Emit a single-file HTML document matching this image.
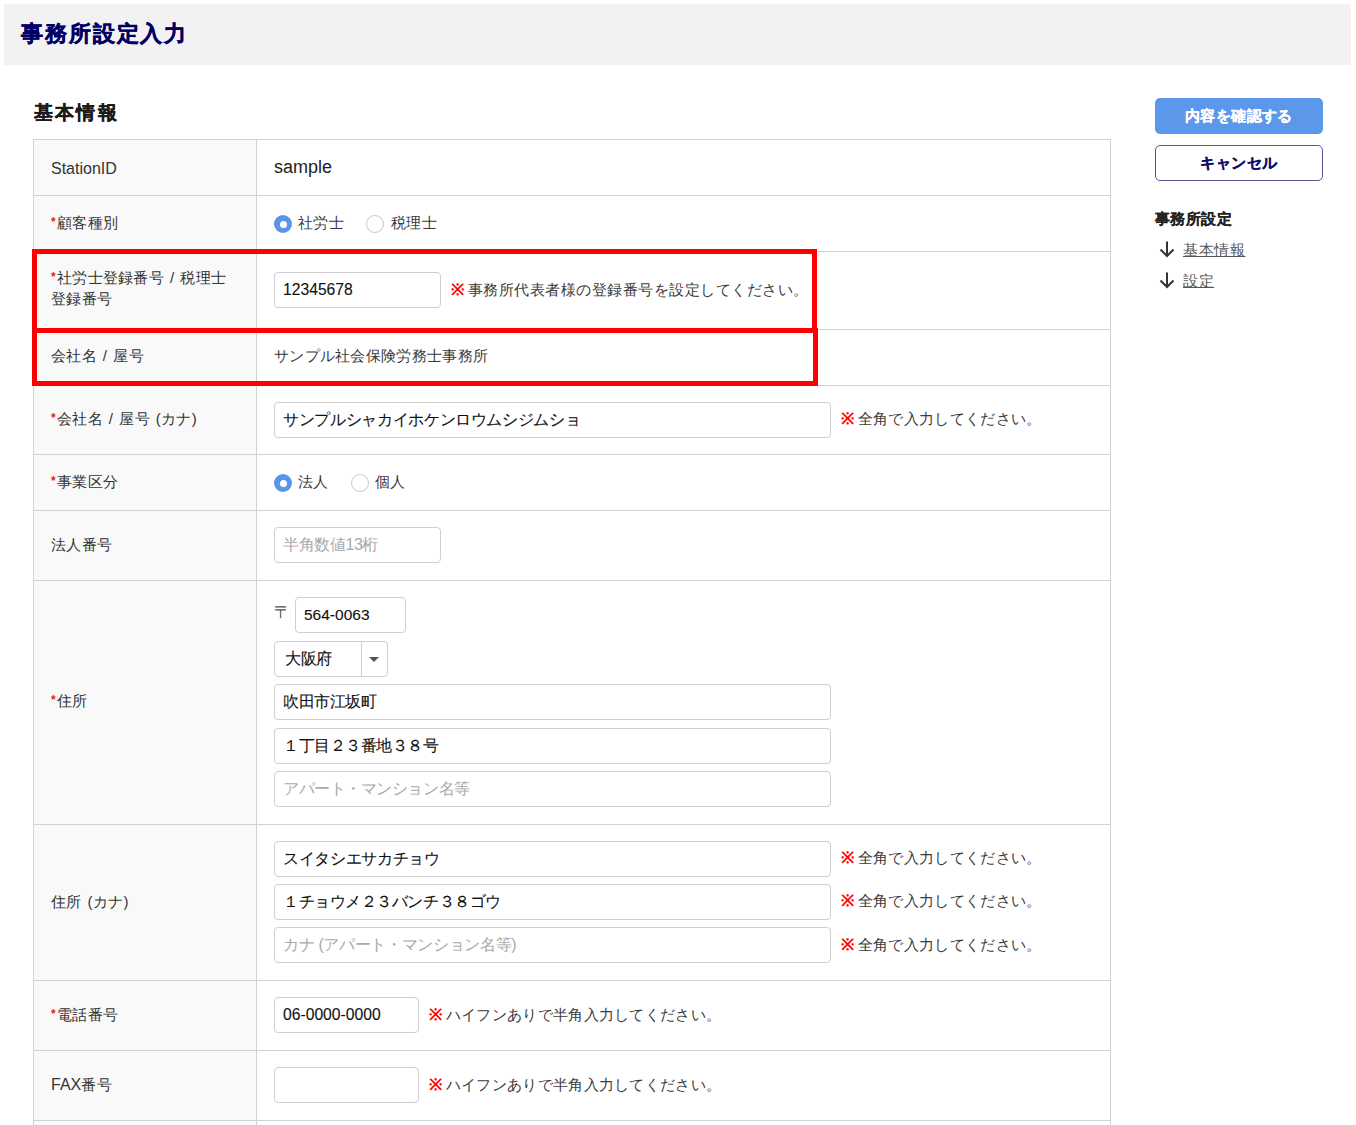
<!DOCTYPE html><html><head><meta charset="utf-8"><style>
*{box-sizing:border-box;margin:0;padding:0}
html,body{width:1356px;height:1125px;overflow:hidden;background:#fff}
body{position:relative;font-family:"Liberation Sans",sans-serif;color:#333;font-size:15px}
.a{position:absolute;white-space:nowrap}
.hdr{position:absolute;left:4px;top:4px;width:1347px;height:61px;background:#f2f2f2}
.title{left:21px;top:19px;font-size:22px;letter-spacing:1.9px;font-weight:bold;color:#000066;line-height:30px;-webkit-text-stroke:0.4px #000066}
.h2{left:34px;top:100px;font-size:19px;letter-spacing:2.2px;font-weight:bold;color:#1a1a1a;line-height:26px;-webkit-text-stroke:0.3px #1a1a1a}
.lab{background:#f9f9f9}
.hl{position:absolute;height:1px;background:#d2d2d2}
.vl{position:absolute;width:1px;background:#d2d2d2}
.lbl{left:51px;font-size:15px;letter-spacing:0.3px;word-spacing:1.5px;color:#333;line-height:20px}
.req{color:#f01818;font-size:12px;font-weight:bold;vertical-align:top;position:relative;top:-1px;margin-right:1px}
.inp{position:absolute;border:1px solid #cfcfcf;border-radius:4px;background:#fff;height:36px}
.itx{font-size:16px;color:#111;line-height:20px;-webkit-text-stroke:0.1px #111}
.itx.ph{-webkit-text-stroke:0}
.ph{color:#a9a9a9}
.note{font-size:15px;letter-spacing:0.3px;color:#3a3a3a;line-height:20px}
.note b{color:#f00;font-weight:bold;margin-right:3.5px;font-size:16px;line-height:20px}
.radio{position:absolute;width:18px;height:18px;border-radius:50%}
.ron{background:#5a94e6}
.ron:after{content:"";position:absolute;left:5.5px;top:5.5px;width:7px;height:7px;border-radius:50%;background:#fff}
.roff{border:1px solid #c8c8c8;background:#fff}
.redbox{position:absolute;border:5px solid #f00}
</style></head><body>

<div class="hdr"></div>
<div class="a title">事務所設定入力</div>
<div class="a h2">基本情報</div>
<div class="a lab" style="left:33px;top:139px;width:224px;height:986px"></div>
<div class="hl" style="left:33px;top:139px;width:1078px"></div>
<div class="hl" style="left:33px;top:195px;width:1078px"></div>
<div class="hl" style="left:33px;top:251px;width:1078px"></div>
<div class="hl" style="left:33px;top:329px;width:1078px"></div>
<div class="hl" style="left:33px;top:385px;width:1078px"></div>
<div class="hl" style="left:33px;top:454px;width:1078px"></div>
<div class="hl" style="left:33px;top:510px;width:1078px"></div>
<div class="hl" style="left:33px;top:580px;width:1078px"></div>
<div class="hl" style="left:33px;top:824px;width:1078px"></div>
<div class="hl" style="left:33px;top:980px;width:1078px"></div>
<div class="hl" style="left:33px;top:1050px;width:1078px"></div>
<div class="hl" style="left:33px;top:1120px;width:1078px"></div>
<div class="vl" style="left:33px;top:139px;height:986px"></div>
<div class="vl" style="left:256px;top:139px;height:986px"></div>
<div class="vl" style="left:1110px;top:139px;height:986px"></div>
<div class="a lbl" style="top:159px;font-size:16px;letter-spacing:0">StationID</div>
<div class="a" style="left:274px;top:156px;font-size:18px;color:#222;line-height:22px">sample</div>
<div class="a lbl" style="top:213px"><span class="req">*</span>顧客種別</div>
<div class="radio ron" style="left:274px;top:215px"></div>
<div class="a note" style="left:298px;top:213px">社労士</div>
<div class="radio roff" style="left:366px;top:215px"></div>
<div class="a note" style="left:391px;top:213px">税理士</div>
<div class="a lbl" style="top:268px"><span class="req">*</span>社労士登録番号 / 税理士</div>
<div class="a lbl" style="top:289px">登録番号</div>
<div class="inp" style="left:274px;top:272px;width:167px;height:36px"></div>
<div class="a itx" style="left:283px;top:280px;letter-spacing:0px"><span style="font-size:15.7px">12345678</span></div>
<div class="a note" style="left:451px;top:280px"><b>※</b><span style="letter-spacing:0.5px">事務所代表者様の登録番号を設定してください。</span></div>
<div class="a lbl" style="top:346px">会社名 / 屋号</div>
<div class="a note" style="left:274px;top:346px">サンプル社会保険労務士事務所</div>
<div class="a lbl" style="top:409px"><span class="req">*</span>会社名 / 屋号 (カナ)</div>
<div class="inp" style="left:274px;top:402px;width:557px;height:36px"></div>
<div class="a itx" style="left:283px;top:410px;letter-spacing:-0.35px">サンプルシャカイホケンロウムシジムショ</div>
<div class="a note" style="left:841px;top:409px"><b>※</b>全角で入力してください。</div>
<div class="a lbl" style="top:472px"><span class="req">*</span>事業区分</div>
<div class="radio ron" style="left:274px;top:474px"></div>
<div class="a note" style="left:298px;top:472px">法人</div>
<div class="radio roff" style="left:351px;top:474px"></div>
<div class="a note" style="left:375px;top:472px">個人</div>
<div class="a lbl" style="top:535px">法人番号</div>
<div class="inp" style="left:274px;top:527px;width:167px;height:36px"></div>
<div class="a itx ph" style="left:283px;top:535px;letter-spacing:-0.4px">半角数値13桁</div>
<div class="a lbl" style="top:691px"><span class="req">*</span>住所</div>
<div class="a" style="left:274px;top:605px;font-size:17px;color:#555;line-height:16px">〒</div>
<div class="inp" style="left:295px;top:597px;width:111px;height:36px"></div>
<div class="a itx" style="left:304px;top:605px;letter-spacing:0px"><span style="font-size:15.5px">564-0063</span></div>
<div class="inp" style="left:274px;top:641px;width:114px"></div>
<div class="vl" style="left:361px;top:642px;height:34px;background:#d0d0d0"></div>
<div class="a" style="left:369px;top:657px;width:0;height:0;border-left:5px solid transparent;border-right:5px solid transparent;border-top:5px solid #555"></div>
<div class="a itx" style="left:285px;top:649px;letter-spacing:-0.3px">大阪府</div>
<div class="inp" style="left:274px;top:684px;width:557px;height:36px"></div>
<div class="a itx" style="left:283px;top:692px;letter-spacing:-0.5px">吹田市江坂町</div>
<div class="inp" style="left:274px;top:728px;width:557px;height:36px"></div>
<div class="a itx" style="left:283px;top:736px;letter-spacing:-0.5px">１丁目２３番地３８号</div>
<div class="inp" style="left:274px;top:771px;width:557px;height:36px"></div>
<div class="a itx ph" style="left:283px;top:779px;letter-spacing:-0.45px">アパート・マンション名等</div>
<div class="a lbl" style="top:892px">住所 (カナ)</div>
<div class="inp" style="left:274px;top:841px;width:557px;height:36px"></div>
<div class="a itx" style="left:283px;top:849px;letter-spacing:-0.35px">スイタシエサカチョウ</div>
<div class="a note" style="left:841px;top:848px"><b>※</b>全角で入力してください。</div>
<div class="inp" style="left:274px;top:884px;width:557px;height:36px"></div>
<div class="a itx" style="left:283px;top:892px;letter-spacing:-0.45px">１チョウメ２３バンチ３８ゴウ</div>
<div class="a note" style="left:841px;top:891px"><b>※</b>全角で入力してください。</div>
<div class="inp" style="left:274px;top:927px;width:557px;height:36px"></div>
<div class="a itx ph" style="left:283px;top:935px;letter-spacing:-0.35px">カナ (アパート・マンション名等)</div>
<div class="a note" style="left:841px;top:935px"><b>※</b>全角で入力してください。</div>
<div class="a lbl" style="top:1005px"><span class="req">*</span>電話番号</div>
<div class="inp" style="left:274px;top:997px;width:145px;height:36px"></div>
<div class="a itx" style="left:283px;top:1005px;letter-spacing:0px"><span style="font-size:15.7px">06-0000-0000</span></div>
<div class="a note" style="left:429px;top:1005px"><b>※</b>ハイフンありで半角入力してください。</div>
<div class="a lbl" style="top:1075px"><span style="font-size:16px;letter-spacing:0">FAX</span>番号</div>
<div class="inp" style="left:274px;top:1067px;width:145px;height:36px"></div>
<div class="a note" style="left:429px;top:1075px"><b>※</b>ハイフンありで半角入力してください。</div>
<div class="redbox" style="left:32px;top:249px;width:785px;height:84px"></div>
<div class="redbox" style="left:32px;top:328px;width:786px;height:58px"></div>
<div class="a" style="left:1155px;top:98px;width:168px;height:36px;background:#5b97eb;border-radius:5px;color:#fff;font-weight:bold;font-size:15px;letter-spacing:0.4px;text-align:center;line-height:36px;-webkit-text-stroke:0.25px #fff">内容を確認する</div>
<div class="a" style="left:1155px;top:145px;width:168px;height:36px;background:#fff;border:1px solid #55559a;border-radius:5px;color:#10106a;font-weight:bold;font-size:15px;letter-spacing:0.6px;text-align:center;line-height:34px;-webkit-text-stroke:0.25px #10106a">キャンセル</div>
<div class="a" style="left:1155px;top:209px;font-size:15px;letter-spacing:0.4px;font-weight:bold;color:#222;line-height:20px;-webkit-text-stroke:0.1px #222">事務所設定</div>
<svg class="a" style="left:1159px;top:240px" width="18" height="18" viewBox="0 0 18 18"><path d="M8 1.5V16M1.5 9.5L8 16L14.5 9.5" fill="none" stroke="#333" stroke-width="2"/></svg>
<svg class="a" style="left:1159px;top:271px" width="18" height="18" viewBox="0 0 18 18"><path d="M8 1.5V16M1.5 9.5L8 16L14.5 9.5" fill="none" stroke="#333" stroke-width="2"/></svg>
<div class="a" style="left:1183px;top:240px;font-size:15px;letter-spacing:0.6px;color:#555;line-height:20px;text-decoration:underline;text-underline-offset:1px">基本情報</div>
<div class="a" style="left:1183px;top:271px;font-size:15px;letter-spacing:0.6px;color:#555;line-height:20px;text-decoration:underline;text-underline-offset:1px">設定</div>
</body></html>
